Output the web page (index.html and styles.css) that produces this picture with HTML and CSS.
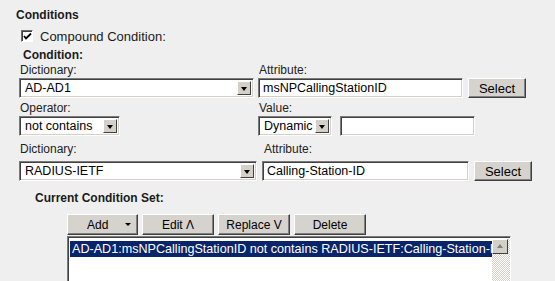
FILE: index.html
```html
<!DOCTYPE html>
<html lang="en">
<head>
    <title>Conditions</title>
    <meta charset="UTF-8">
    <link rel="stylesheet" href="styles.css">
</head>
<body>
<div class="panel">
    <div class="title">Conditions</div>
    <div class="check-row">
        <span class="checkbox">
            <svg width="9" height="9" viewBox="0 0 9 9"><path d="M1 4 L3 6.5 L8 1.5" fill="none" stroke="#000" stroke-width="1.8"/></svg>
        </span>
        <span>Compound Condition:</span>
    </div>
    <div class="sub">Condition:</div>

    <div class="row labels first">
        <span class="col1">Dictionary:</span>
        <span>Attribute:</span>
    </div>
    <div class="row">
        <div class="select col1"><span class="val">AD-AD1</span><span class="arrow"></span></div>
        <div class="input w205">msNPCallingStationID</div>
        <div class="button sel">Select</div>
    </div>

    <div class="row labels">
        <span class="col1">Operator:</span>
        <span>Value:</span>
    </div>
    <div class="row">
        <div class="col1 cell">
            <div class="select op"><span class="val">not contains</span><span class="arrow"></span></div>
        </div>
        <div class="select dyn"><span class="val">Dynamic</span><span class="arrow"></span></div>
        <div class="input w135"></div>
    </div>

    <div class="row labels third">
        <span class="col1">Dictionary:</span>
        <span class="ind">Attribute:</span>
    </div>
    <div class="row ctrls3">
        <div class="select col1 wide"><span class="val">RADIUS-IETF</span><span class="arrow"></span></div>
        <div class="input w206">Calling-Station-ID</div>
        <div class="button sel">Select</div>
    </div>

    <div class="sub set">Current Condition Set:</div>
    <div class="toolbar">
        <div class="button tb add">Add <span class="drop"></span></div>
        <div class="button tb">Edit &Lambda;</div>
        <div class="button tb">Replace V</div>
        <div class="button tb">Delete</div>
    </div>
    <div class="listbox">
        <div class="items">
            <div class="item on">AD-AD1:msNPCallingStationID not contains RADIUS-IETF:Calling-Station-ID</div>
        </div>
        <div class="scroll">
            <div class="up"></div>
        </div>
    </div>
</div>
</body>
</html>
```
FILE: styles.css
```css
body {
    margin: 0;
    background-color: #efefef;
    font-family: "Liberation Sans", Arial, sans-serif;
    color: #1a1a1a;
}

.panel {
    padding-top: 8px;
    height: 273px;
    overflow: hidden;
}

.title {
    font: bold 12px/14px "Liberation Sans", Arial, sans-serif;
    padding-left: 16px;
}

.check-row {
    display: flex;
    align-items: center;
    height: 20px;
    margin-top: 4px;
    padding-left: 21px;
    font-size: 13px;
}

.checkbox {
    width: 10px;
    height: 10px;
    background: #fff;
    border: 1px solid;
    border-color: #6d6d6d #fff #fff #6d6d6d;
    box-shadow: inset 1px 1px 0 #404040;
    display: flex;
    align-items: center;
    justify-content: center;
    margin-right: 7px;
}

.sub {
    font: bold 12px/14px "Liberation Sans", Arial, sans-serif;
    padding-left: 23px;
    margin-top: 2px;
}

.row {
    display: flex;
    padding-left: 19px;
}

.labels {
    font-size: 12px;
    line-height: 14px;
    color: #222;
    margin-top: 3px;
    margin-bottom: 1px;
}

.labels.first {
    margin-top: 1px;
}

.labels.third {
    margin-top: 6px;
    margin-bottom: 5px;
}

.labels .col1 {
    padding-left: 1px;
}

.ind {
    padding-left: 5px;
}

.col1 {
    width: 235px;
    margin-right: 4px;
    flex: none;
}

.select, .input {
    box-sizing: border-box;
    height: 20px;
    background: #fff;
    border: 1px solid;
    border-color: #7a7a7a #fff #fff #7a7a7a;
    box-shadow: inset 1px 1px 0 #404040, inset -1px -1px 0 #d4d0c8;
    font-size: 12.5px;
    line-height: 18px;
    color: #000;
    display: flex;
    align-items: center;
}

.select .val {
    flex: 1;
    padding-left: 5px;
    white-space: nowrap;
}

.input {
    padding-left: 4px;
}

.arrow {
    width: 14px;
    height: 14px;
    margin-right: 2px;
    background: #d4d0c8;
    border: 1px solid;
    border-color: #fff #404040 #404040 #fff;
    box-sizing: border-box;
    position: relative;
}

.arrow::after {
    content: "";
    position: absolute;
    left: 3px;
    top: 5px;
    border-left: 3.5px solid transparent;
    border-right: 3.5px solid transparent;
    border-top: 4px solid #000;
}

.cell {
    display: flex;
}

.op {
    width: 101px;
}

.dyn {
    width: 74px;
    margin-right: 8px;
}

.w205 {
    width: 205px;
}

.w206 {
    width: 207px;
}

.w135 {
    width: 135px;
}

.wide {
    width: 238px;
    margin-right: 5px;
}

.button {
    box-sizing: border-box;
    height: 20px;
    background: #d6d3ce;
    border: 1px solid;
    border-color: #fff #404040 #404040 #fff;
    box-shadow: inset -1px -1px 0 #808080;
    font-size: 13px;
    color: #000;
    display: flex;
    align-items: center;
    justify-content: center;
}

.sel {
    width: 58px;
    margin-left: 5px;
}

.set {
    padding-left: 35px;
    margin-top: 10px;
}

.toolbar {
    display: flex;
    gap: 4px;
    padding-left: 67px;
    margin-top: 9px;
}

.tb {
    width: 72px;
    height: 21px;
    font-size: 12px;
}

.add {
    width: 71px;
    justify-content: flex-start;
    padding-left: 19px;
}

.drop {
    margin-left: 17px;
    border-left: 3px solid transparent;
    border-right: 3px solid transparent;
    border-top: 3px solid #000;
}

.listbox {
    margin-left: 67px;
    margin-top: 1px;
    width: 444px;
    height: 60px;
    box-sizing: border-box;
    border: 1px solid;
    border-color: #7a7a7a #fff #fff #7a7a7a;
    box-shadow: inset 1px 1px 0 #404040;
    background: #fff;
    display: flex;
    padding: 2px 0 0 2px;
}

.items {
    flex: 1;
    overflow: hidden;
    padding-top: 2px;
}

.item {
    font-size: 12.6px;
    line-height: 16px;
    white-space: nowrap;
    padding-left: 2px;
}

.item.on {
    background: #0a246a;
    color: #fff;
}

.scroll {
    width: 18px;
    background-color: #ece9e4;
    background-image: repeating-conic-gradient(#fff 0 25%, #d4d0c8 0 50%);
    background-size: 2px 2px;
}

.up {
    width: 16px;
    height: 15px;
    box-sizing: border-box;
    background: #d4d0c8;
    border: 1px solid;
    border-color: #fff #404040 #404040 #fff;
    position: relative;
}

.up::after {
    content: "";
    position: absolute;
    left: 4px;
    top: 4px;
    border-left: 3.5px solid transparent;
    border-right: 3.5px solid transparent;
    border-bottom: 4px solid #808080;
}
```
